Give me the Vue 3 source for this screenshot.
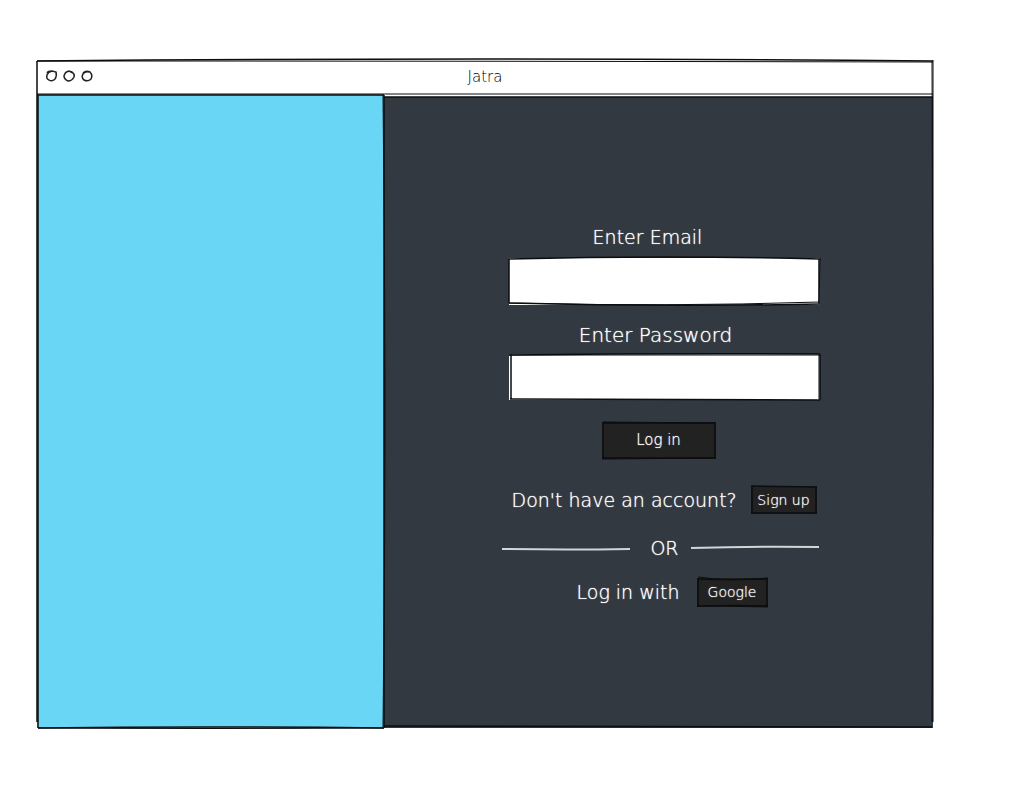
<script setup>
import { ref } from 'vue'

const email = ref('')
const password = ref('')
</script>

<template>
  <main class="page">
    <section class="window">
      <header class="titlebar">
        <svg class="dots" viewBox="0 0 48 14" width="48" height="14" aria-hidden="true">
          <path d="M2 4Q3 2 7 2L11 3Q12 7 10 10Q7 13 4 11Q1 10 2 6Q3 3 7 2" />
          <path d="M20 4Q23 1 27 3Q30 5 29 8Q27 12 23 12Q19 10 19 7Q20 3 24 2L28 4" />
          <path d="M38 4Q41 1 45 3Q48 6 46 10Q43 13 39 11Q36 8 38 5Q40 2 44 3" />
        </svg>
        <h1 class="title">Jatra</h1>
      </header>
      <div class="body">
        <aside class="side">
          <svg class="sketch" viewBox="0 0 347 632" preserveAspectRatio="none" aria-hidden="true">
            <path d="M0 0L347 0M347 0Q348 300 347 632M1 632Q170 630 347 632M1 0Q0 320 1 632" />
            <path class="thin" d="M346 0Q350 320 346 632M1 632Q170 633 347 632" />
          </svg>
        </aside>
        <div class="panel">
          <form class="form" @submit.prevent>
            <label class="label label-email" for="email">Enter Email</label>
            <div class="field field-email">
              <input id="email" v-model="email" type="email" />
              <svg class="sketch" viewBox="0 0 310 47" preserveAspectRatio="none" aria-hidden="true">
                <path d="M0 1Q155 -3 310 1M309 1L309 45M0 45Q155 49 310 46M0 1L0 45" />
                <path class="thin" d="M0 45Q155 49 310 44M310 0L309 46" />
              </svg>
            </div>
            <label class="label label-password" for="password">Enter Password</label>
            <div class="field field-password">
              <input id="password" v-model="password" type="password" />
              <svg class="sketch" viewBox="0 0 310 46" preserveAspectRatio="none" aria-hidden="true">
                <path d="M0 1Q155 -1 310 0M310 0L310 46M1 45Q155 45 310 46M2 0L2 45" />
                <path class="thin" d="M0 1L310 1M309 1L309 45" />
              </svg>
            </div>
            <button class="button login" type="submit">
              Log in
              <svg class="sketch" viewBox="0 0 114 37" preserveAspectRatio="none" aria-hidden="true">
                <path d="M0 1L114 1M113 0L113 36M0 36L114 36M1 0L1 37" />
                <path class="thin" d="M1 0L113 1M0 37L114 36" />
              </svg>
            </button>
            <div class="row signup-row">
              <span>Don't have an account?</span>
              <button class="button signup" type="button">
                Sign up
                <svg class="sketch" viewBox="0 0 66 28" preserveAspectRatio="none" aria-hidden="true">
                  <path d="M0 0L66 1M65 0L65 28M0 27L66 27M1 0L1 28" />
                </svg>
              </button>
            </div>
            <div class="divider">
              <svg class="rule" viewBox="0 0 128 6" preserveAspectRatio="none" aria-hidden="true">
                <path d="M0 4Q64 5 128 4" />
              </svg>
              <span>OR</span>
              <svg class="rule" viewBox="0 0 128 6" preserveAspectRatio="none" aria-hidden="true">
                <path d="M0 3Q64 1 128 2" />
              </svg>
            </div>
            <div class="row google-row">
              <span>Log in with</span>
              <button class="button google" type="button">
                Google
                <svg class="sketch" viewBox="0 0 71 29" preserveAspectRatio="none" aria-hidden="true">
                  <path d="M0 1Q35 2 71 1M70 0L70 29M0 28Q35 27 71 28M1 0L1 28" />
                  <path class="thin" d="M1 -1Q35 4 71 0M0 28Q35 28 71 29" />
                </svg>
              </button>
            </div>
          </form>
        </div>
      </div>
      <svg class="sketch" viewBox="0 0 896 668" preserveAspectRatio="none" aria-hidden="true">
        <path d="M0 1Q440 -3 896 1M0 1Q1 330 0 662" />
        <path class="thin" d="M0 1Q440 1 896 2M0 34L896 34M895 1Q897 330 895 662M896 0Q896 330 896 662" />
        <path d="M347 37Q620 38 896 37M347 666Q620 666 895 667" />
      </svg>
    </section>
  </main>
</template>

<style>
body {
  margin: 0;
  background: #fff;
}
</style>

<style scoped>
.page {
  box-sizing: border-box;
  min-height: 100vh;
  display: flex;
  padding: 60px 85px 78px 37px;
  font-family: "DejaVu Sans", "Open Sans", sans-serif;
  font-weight: 200;
  font-size: 19px;
  line-height: 24px;
  color: #fff;
}

.window {
  position: relative;
  flex: 1;
  display: flex;
  flex-direction: column;
}

.titlebar {
  display: grid;
  grid-template-columns: 1fr auto 1fr;
  align-items: center;
  height: 35px;
  padding: 0 8px;
  box-sizing: border-box;
  color: #000;
}

.dots {
  fill: none;
  stroke: #222;
  stroke-width: 1.5;
  margin-bottom: 4px;
}

.title {
  margin: 0;
  padding-bottom: 2px;
  font-size: 15px;
  font-weight: 200;
}

.body {
  flex: 1;
  display: grid;
  grid-template-columns: 347fr 549fr;
}

.side {
  position: relative;
  background: #69d6f5;
}

.panel {
  display: flex;
  align-items: center;
  justify-content: center;
  margin-top: 2px;
  padding: 6px 0 0 4px;
  background: #323940;
  text-shadow: 0 0 1px #fff;
}

.form {
  display: flex;
  flex-direction: column;
  width: 318px;
}

.label {
  text-align: center;
}

.label-email {
  padding-right: 26px;
}

.label-password {
  padding-right: 10px;
  font-size: 20px;
}

.field {
  position: relative;
  margin-left: 7px;
}

.field-email {
  height: 47px;
  margin-top: 9px;
  margin-bottom: 18px;
}

.field-password {
  height: 46px;
  margin-top: 7px;
}

.field input {
  display: block;
  box-sizing: border-box;
  width: 100%;
  height: 100%;
  padding: 0 12px;
  border: 0;
  border-radius: 0;
  background: #fff;
  color: #111;
  font: inherit;
}

.button {
  position: relative;
  padding: 0;
  border: 0;
  background: #222;
  color: #fff;
  font: inherit;
  font-size: 14px;
  text-shadow: inherit;
  cursor: pointer;
}

.login {
  align-self: center;
  width: 114px;
  height: 37px;
  margin: 22px 4px 0 0;
  font-size: 15px;
}

.row {
  display: flex;
  align-items: center;
  white-space: nowrap;
}

.signup-row {
  justify-content: space-between;
  margin-top: 27px;
  padding: 0 3px 0 10px;
}

.signup {
  width: 66px;
  height: 28px;
}

.divider {
  display: flex;
  align-items: center;
  justify-content: space-between;
  margin-top: 22px;
}

.divider span {
  padding-left: 8px;
}

.rule {
  width: 128px;
  height: 6px;
  fill: none;
  stroke: #d3d5d7;
  stroke-width: 2;
}

.google-row {
  justify-content: space-between;
  margin-top: 18px;
  padding: 0 52px 0 75px;
}

.google {
  width: 71px;
  height: 29px;
}

.sketch {
  position: absolute;
  inset: 0;
  width: 100%;
  height: 100%;
  overflow: visible;
  fill: none;
  stroke: #0b0d0f;
  stroke-width: 1.5;
  pointer-events: none;
}

.sketch path,
.rule path {
  vector-effect: non-scaling-stroke;
}

.sketch .thin {
  stroke-width: 1;
}
</style>
